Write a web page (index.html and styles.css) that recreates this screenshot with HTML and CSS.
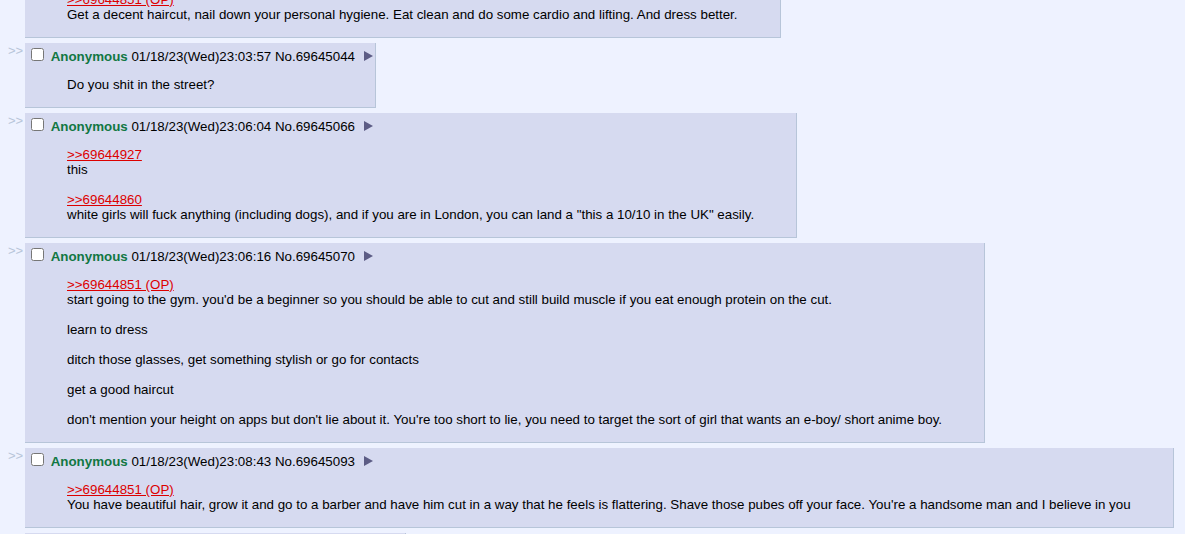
FILE: index.html
```html
<!DOCTYPE html>
<html lang="en">
<head>
  <meta charset="UTF-8" />
  <title>/r9k/ - Thread</title>
  <link rel="stylesheet" href="styles.css">
</head>
<body>

<div class="thread">

  <div class="reply-container">
    <div class="side-arrows">&gt;&gt;</div>
    <div class="post">
      <div class="post-info">
        <input type="checkbox">
        <span class="name">Anonymous</span>
        <span class="date">01/18/23(Wed)23:03:21</span>
        <a class="post-num">No.69645012</a>
        <span class="menu-btn"></span>
      </div>
      <blockquote class="message">
        <a class="quotelink">&gt;&gt;69644851 (OP)</a><br>
        Get a decent haircut, nail down your personal hygiene. Eat clean and do some cardio and lifting. And dress better.
      </blockquote>
    </div>
  </div>

  <div class="reply-container">
    <div class="side-arrows">&gt;&gt;</div>
    <div class="post">
      <div class="post-info">
        <input type="checkbox">
        <span class="name">Anonymous</span>
        <span class="date">01/18/23(Wed)23:03:57</span>
        <a class="post-num">No.69645044</a>
        <span class="menu-btn"></span>
      </div>
      <blockquote class="message">Do you shit in the street?</blockquote>
    </div>
  </div>

  <div class="reply-container">
    <div class="side-arrows">&gt;&gt;</div>
    <div class="post">
      <div class="post-info">
        <input type="checkbox">
        <span class="name">Anonymous</span>
        <span class="date">01/18/23(Wed)23:06:04</span>
        <a class="post-num">No.69645066</a>
        <span class="menu-btn"></span>
      </div>
      <blockquote class="message">
        <a class="quotelink">&gt;&gt;69644927</a><br>
        this<br><br>
        <a class="quotelink">&gt;&gt;69644860</a><br>
        white girls will fuck anything (including dogs), and if you are in London, you can land a "this a 10/10 in the UK" easily.
      </blockquote>
    </div>
  </div>

  <div class="reply-container">
    <div class="side-arrows">&gt;&gt;</div>
    <div class="post">
      <div class="post-info">
        <input type="checkbox">
        <span class="name">Anonymous</span>
        <span class="date">01/18/23(Wed)23:06:16</span>
        <a class="post-num">No.69645070</a>
        <span class="menu-btn"></span>
      </div>
      <blockquote class="message">
        <a class="quotelink">&gt;&gt;69644851 (OP)</a><br>
        start going to the gym. you'd be a beginner so you should be able to cut and still build muscle if you eat enough protein on the cut.<br><br>
        learn to dress<br><br>
        ditch those glasses, get something stylish or go for contacts<br><br>
        get a good haircut<br><br>
        don't mention your height on apps but don't lie about it. You're too short to lie, you need to target the sort of girl that wants an e-boy/ short anime boy.
      </blockquote>
    </div>
  </div>

  <div class="reply-container">
    <div class="side-arrows">&gt;&gt;</div>
    <div class="post">
      <div class="post-info">
        <input type="checkbox">
        <span class="name">Anonymous</span>
        <span class="date">01/18/23(Wed)23:08:43</span>
        <a class="post-num">No.69645093</a>
        <span class="menu-btn"></span>
      </div>
      <blockquote class="message">
        <a class="quotelink">&gt;&gt;69644851 (OP)</a><br>
        You have beautiful hair, grow it and go to a barber and have him cut in a way that he feels is flattering. Shave those pubes off your face. You're a handsome man and I believe in you
      </blockquote>
    </div>
  </div>

  <div class="reply-container">
    <div class="side-arrows">&gt;&gt;</div>
    <div class="post">
      <div class="post-info">
        <input type="checkbox">
        <span class="name">Anonymous</span>
        <span class="date">01/18/23(Wed)23:09:12</span>
        <a class="post-num">No.69645101</a>
        <span class="menu-btn"></span>
      </div>
      <blockquote class="message">
        <a class="quotelink">&gt;&gt;69644851 (OP)</a><br>
        lose some weight and fix your posture, that's it bro
      </blockquote>
    </div>
  </div>

</div>

</body>
</html>
```

FILE: styles.css
```css
body {
  background-color: #eef2ff;
  color: #000;
  font-family: "Liberation Sans", Arial, sans-serif;
  font-size: 10pt;
  margin: 0;
  overflow: hidden;
}
.thread {
  margin-top: -47px;
  padding-left: 6px;
}
.reply-container {
  display: flex;
  align-items: flex-start;
  margin: 5px 0;
}
.side-arrows {
  width: 15px;
  color: #b7c5d9;
  font-size: 13px;
  margin: 0 2px;
  white-space: nowrap;
}
.post {
  background-color: #d6daf0;
  border-right: 1px solid #b7c5d9;
  border-bottom: 1px solid #b7c5d9;
  padding: 2px;
}
.post-info input {
  margin: 3px 3px 3px 4px;
  width: 13px;
  height: 13px;
}
.name {
  color: #117743;
  font-weight: bold;
}
.post-num {
  color: #000;
  text-decoration: none;
}
.menu-btn {
  display: inline-block;
  width: 0;
  height: 0;
  margin-left: 5px;
  border-left: 9px solid #5c5c85;
  border-top: 5px solid transparent;
  border-bottom: 5px solid transparent;
}
.message {
  margin: 13px 40px;
}
.quotelink {
  color: #d00;
  text-decoration: underline;
}
```
